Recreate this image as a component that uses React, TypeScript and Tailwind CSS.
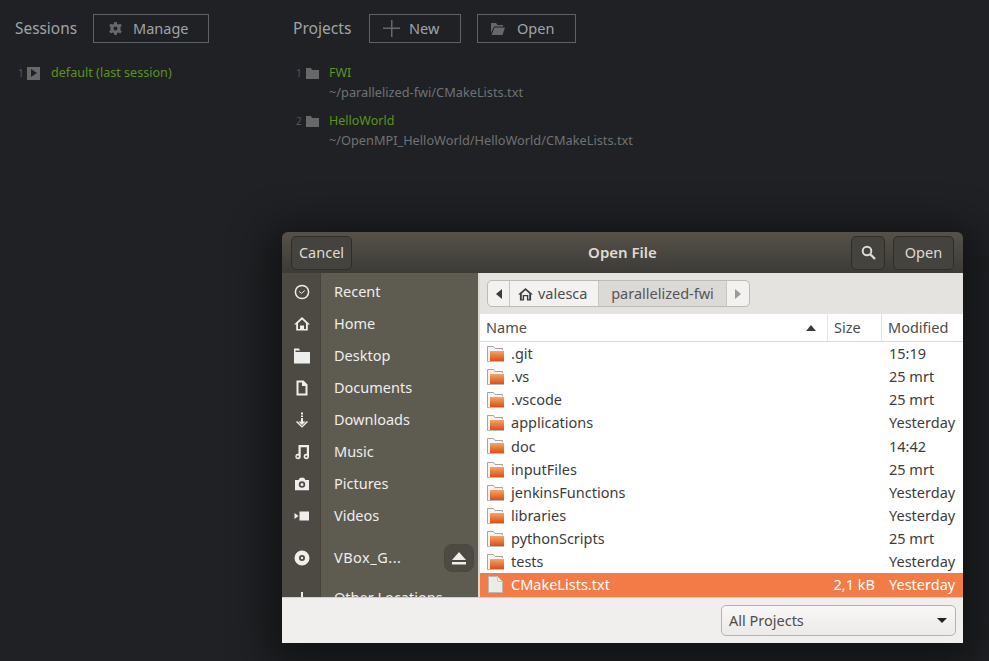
import React from "react";

const font = { fontFamily: '"Noto Sans", "DejaVu Sans", sans-serif' };

function Folder() {
  return (
    <svg width="17" height="16" viewBox="0 0 17 16" className="shrink-0">
      <defs>
        <linearGradient id="fg" x1="0" y1="0" x2="0" y2="1">
          <stop offset="0" stopColor="#f4a56e" />
          <stop offset="0.5" stopColor="#ea7a38" />
          <stop offset="1" stopColor="#d94f1a" />
        </linearGradient>
      </defs>
      <path d="M0.500 15.500V0.500H6.500L8 2.500H15.500V15.500z" fill="#f6f5f3" stroke="#a6a4a0" />
      <rect x="3" y="4" width="14" height="11" fill="#f7f3ee" />
      <rect x="3" y="5" width="14" height="10" fill="url(#fg)" />
      <rect x="1" y="15" width="16" height="1" fill="#bdb9b4" />
    </svg>
  );
}

function FileIcon() {
  return (
    <svg width="15" height="17" viewBox="0 0 15 17" className="shrink-0">
      <path d="M0.500 0.500H9.500L14.500 5.500V16.500H0.500z" fill="#ebebe9" stroke="#b9b8b5" />
      <path d="M9.500 0.500V5.500H14.500z" fill="#fbfbfa" stroke="#c9c8c5" />
    </svg>
  );
}

const side: [string, React.ReactNode][] = [
  ["Recent", <g key="r"><circle cx="8" cy="8" r="6.600" fill="none" stroke="#eeeeec" strokeWidth="1.500" /><path d="M5.200 7.600 7.600 9.400 10.800 6.400" fill="none" stroke="#eeeeec" strokeWidth="1" /></g>],
  ["Home", <path key="h" fillRule="evenodd" d="M8 1 16 8.500H13.800V14.500H2.200V8.500H0z M8 3.400 4 7.200V13H6V9.500H10V13H12V7.200z" fill="#eeeeec" />],
  ["Desktop", <path key="d" fillRule="evenodd" d="M0 0.500H5L6 2.500H1.500V4H16V15.500H0z" fill="#eeeeec" />],
  ["Documents", <path key="do" fillRule="evenodd" d="M2.500 0.500H9.500L13.500 4.500V15.500H2.500z M4.500 2.500V13.500H11.500V6H8V2.500z" fill="#eeeeec" />],
  ["Downloads", <path key="dl" d="M7 0.500H9V2.500H7z M7 3.500H9V5H7z M7 6H9V9.500H11.500L8 13 4.500 9.500H7z M2 10 3.200 9 8 14 12.800 9 14 10 8 15.800z" fill="#eeeeec" />],
  ["Music", <path key="m" fillRule="evenodd" d="M4.500 1H15V12.500A2.700 2.700 0 1 1 12.800 9.800V3.200H6.700V12.500A2.700 2.700 0 1 1 4.500 9.800z M3.800 11.400A1.100 1.100 0 1 0 3.800 13.600 1.100 1.100 0 0 0 3.800 11.400z M12.300 11.400A1.100 1.100 0 1 0 12.300 13.600 1.100 1.100 0 0 0 12.300 11.400z" fill="#eeeeec" />],
  ["Pictures", <path key="p" fillRule="evenodd" d="M1 4H4.500L6 1.800H10L11.500 4H15V14.200H1z M8 5.300A3.200 3.200 0 1 0 8 11.700 3.200 3.200 0 0 0 8 5.300z M8 7A1.500 1.500 0 1 1 8 10 1.500 1.500 0 0 1 8 7z" fill="#eeeeec" />],
  ["Videos", <path key="v" d="M5.500 3.500H15V12.500H5.500z M0.500 5 4.500 8 0.500 11z" fill="#eeeeec" />],
];

const rows = [
  [".git", "15:19"], [".vs", "25 mrt"], [".vscode", "25 mrt"], ["applications", "Yesterday"],
  ["doc", "14:42"], ["inputFiles", "25 mrt"], ["jenkinsFunctions", "Yesterday"], ["libraries", "Yesterday"],
  ["pythonScripts", "25 mrt"], ["tests", "Yesterday"],
];

function TopBtn({ w, pad, icon, label, gap }: { w: string; pad: string; icon: React.ReactNode; label: string; gap: string }) {
  return (
    <div className={`${w} ${gap} ${pad} h-[29px] border border-[#5f6265] flex items-center text-[14.5px] text-[#a0a4a8]`}>
      {icon}
      <span>{label}</span>
    </div>
  );
}

function Proj({ n, name, path }: { n: string; name: string; path: string }) {
  return (
    <div className="h-[48px]">
      <div className="flex items-center h-[18px]">
        <span className="w-[9px] text-[10px] text-[#55585b]">{n}</span>
        <svg width="13" height="11" viewBox="0 0 13 11" className="ml-[1px]"><path d="M0 0H5L6 2H13V11H0z" fill="#66686a" /></svg>
        <span className="ml-[10px] text-[12.5px] text-[#5a9420]">{name}</span>
      </div>
      <div className="ml-[33px] mt-[1px] h-[18px] text-[12.75px] text-[#6f7275] leading-[18px]">{path}</div>
    </div>
  );
}

export default function App() {
  return (
    <div className="relative w-[989px] h-[661px] overflow-hidden bg-[#1f2124]" style={font}>
      <div className="flex pt-[14px]">
        <div className="w-[293px] pl-[15px]">
          <div className="flex items-center">
            <span className="w-[78px] text-[15.4px] text-[#a0a4a8]">Sessions</span>
            <TopBtn w="w-[116px]" pad="pl-[15px]" gap="gap-[11px]" label="Manage" icon={
              <svg width="13" height="13" viewBox="0 0 16 16"><path fillRule="evenodd" d="M6.500 0H9.500L10 2.400 11.800 3.200 14 2 15.800 4.500 14 6 14.300 8 14 10 15.800 11.500 14 14 11.800 12.800 10 13.600 9.500 16H6.500L6 13.600 4.200 12.800 2 14 0.200 11.500 2 10 1.700 8 2 6 0.200 4.500 2 2 4.200 3.200 6 2.400z M8 5.500A2.500 2.500 0 1 0 8 10.500 2.500 2.500 0 0 0 8 5.500z" fill="#66686a" /></svg>
            } />
          </div>
          <div className="flex items-center h-[18px] mt-[21px] pl-[3px]">
            <span className="w-[9px] text-[10px] text-[#55585b]">1</span>
            <span className="w-[13px] h-[13px] bg-[#66686a] flex items-center justify-center">
              <svg width="6" height="8" viewBox="0 0 6 8"><path d="M0 0 6 4 0 8z" fill="#1f2124" /></svg>
            </span>
            <span className="ml-[11px] text-[12.6px] text-[#5a9420]">default (last session)</span>
          </div>
        </div>
        <div>
          <div className="flex items-center">
            <span className="w-[76px] text-[15.6px] text-[#a0a4a8]">Projects</span>
            <TopBtn w="w-[92px]" pad="pl-[13px]" gap="gap-[9px]" label="New" icon={
              <svg width="17" height="17" viewBox="0 0 17 17"><path d="M8 0H9.500V7.500H17V9H9.500V17H8V9H0V7.500H8z" fill="#66686a" /></svg>
            } />
            <div className="w-[16px]" />
            <TopBtn w="w-[99px]" pad="pl-[13px]" gap="gap-[12px]" label="Open" icon={
              <svg width="14" height="12" viewBox="0 0 14 12"><path d="M0 0H5L6.500 2H12V3.500H3L0 10z M3.500 4.500H14L11.500 12H0.500z" fill="#66686a" /></svg>
            } />
          </div>
          <div className="mt-[21px] pl-[3px]">
            <Proj n="1" name="FWI" path="~/parallelized-fwi/CMakeLists.txt" />
            <Proj n="2" name="HelloWorld" path="~/OpenMPI_HelloWorld/HelloWorld/CMakeLists.txt" />
          </div>
        </div>
      </div>

      {/* Open File dialog window */}
      <div className="absolute left-[282px] top-[232px] w-[681px] h-[411px] rounded-t-[6px] overflow-hidden flex flex-col shadow-[0_8px_40px_14px_rgba(0,0,0,0.45)]">
        <div className="h-[41px] shrink-0 bg-gradient-to-b from-[#56524a] to-[#3d3b36] flex items-center px-[9px] text-[14.5px] text-[#dfdbd2]">
          <div className="flex-1 flex">
            <div className="w-[61px] h-[34px] rounded-[5px] border border-[#2e2d29] bg-[#45433d] flex items-center justify-center">Cancel</div>
          </div>
          <div className="font-semibold text-[15px]">Open File</div>
          <div className="flex-1 flex justify-end">
            <div className="w-[34px] h-[34px] rounded-[5px] border border-[#2e2d29] bg-[#45433d] flex items-center justify-center">
              <svg width="15" height="15" viewBox="0 0 15 15"><circle cx="6" cy="6" r="4.300" fill="none" stroke="#dfdbd2" strokeWidth="2" /><path d="M9.500 9.500 14 14" stroke="#dfdbd2" strokeWidth="2.400" /></svg>
            </div>
            <div className="w-[61px] h-[34px] ml-[8px] rounded-[5px] border border-[#2e2d29] bg-[#45433d] flex items-center justify-center">Open</div>
          </div>
        </div>
        <div className="flex h-[324px] shrink-0">
          <div className="w-[198px] shrink-0 flex bg-[#5e5b50] border-r-[2px] border-[#dcdad5] overflow-hidden">
            <div className="w-[39px] bg-[#4c4a42] border-r border-[#46443d] shrink-0 h-full" />
            <div className="w-[156px] -ml-[39px] shrink-0 relative z-10">
              <div className="h-[3px]" />
              {side.map(([label, icon]) => (
                <div key={label} className="h-[32px] flex items-center text-[14.5px] text-[#eeeeec] w-[195px]">
                  <svg width="16" height="16" viewBox="0 0 16 16" className="ml-[12px]">{icon}</svg>
                  <span className="ml-[24px]">{label}</span>
                </div>
              ))}
              <div className="h-[52px] flex items-center text-[14.5px] text-[#eeeeec] w-[195px]">
                <svg width="16" height="16" viewBox="0 0 16 16" className="ml-[12px]">
                  <path fillRule="evenodd" d="M8 0.500A7.500 7.500 0 1 0 8 15.500 7.500 7.500 0 0 0 8 0.500z M8 5A3 3 0 1 1 8 11 3 3 0 0 1 8 5z M8 6.800A1.200 1.200 0 1 0 8 9.200 1.200 1.200 0 0 0 8 6.800z" fill="#eeeeec" />
                </svg>
                <span className="ml-[24px] w-[110px] tracking-[0.5px]">VBox_G...</span>
                <div className="w-[30px] h-[28px] rounded-[8px] bg-[#4c4a42] border border-[#4a4840] flex items-center justify-center">
                  <svg width="14" height="13" viewBox="0 0 14 13"><path d="M7 0 14 8H0z M0 10H14V12.500H0z" fill="#eeeeec" /></svg>
                </div>
              </div>
              <div className="h-[32px] -mt-[2px] flex items-center text-[14.5px] text-[#eeeeec] w-[195px]">
                <svg width="16" height="16" viewBox="0 0 16 16" className="ml-[12px]"><path d="M7 2H9V7H14V9H9V14H7V9H2V7H7z" fill="#eeeeec" /></svg>
                <span className="ml-[24px]">Other Locations</span>
              </div>
            </div>
          </div>
          <div className="flex-1 flex flex-col bg-white overflow-hidden">
            <div className="h-[41px] shrink-0 bg-[#e4e3e0] flex items-center pl-[7px]">
              <div className="h-[27px] flex items-center rounded-[5px] border border-[#bdbbb6] bg-[#f3f2f0] text-[14.5px] text-[#4c4c4c]">
                <div className="w-[22px] h-full flex items-center justify-center border-r border-[#c9c7c2]">
                  <svg width="6" height="10" viewBox="0 0 6 10"><path d="M6 0V10L0 5z" fill="#3c3c3c" /></svg>
                </div>
                <div className="w-[88px] h-full flex items-center gap-[5px] pl-[8px]">
                  <svg width="15" height="14" viewBox="0 0 16 15"><path d="M8 1 16 8H14V14.500H9.500V10H6.500V14.500H2V8H0zM4 7V13H5V8.500H11V13H12V7L8 3.400z" fill="#3c3c3c" fillRule="evenodd" /></svg>
                  <span>valesca</span>
                </div>
                <div className="w-[129px] h-full flex items-center justify-center bg-[#dcdad7] border-x border-[#c9c7c2] text-[#555]">parallelized-fwi</div>
                <div className="w-[22px] h-full flex items-center justify-center">
                  <svg width="6" height="10" viewBox="0 0 6 10"><path d="M0 0V10L6 5z" fill="#9a9a98" /></svg>
                </div>
              </div>
            </div>
            <div className="h-[28px] shrink-0 flex items-center border-b border-[#dcdad5] text-[14.5px] text-[#4c4c4c]">
              <div className="w-[348px] h-full flex items-center justify-between pl-[6px] pr-[11px] border-r border-[#e4e3e0]">
                <span>Name</span>
                <svg width="10" height="6" viewBox="0 0 10 6"><path d="M5 0 10 6H0z" fill="#3c3c3c" /></svg>
              </div>
              <div className="w-[54px] h-full flex items-center pl-[6px] border-r border-[#e4e3e0]">Size</div>
              <div className="pl-[6px]">Modified</div>
            </div>
            <div className="flex-1 text-[14.5px] text-[#3c3c3c] pt-[0.5px]">
              {rows.map(([n, d]) => (
                <div key={n} className="h-[23.100px] flex items-center">
                  <div className="w-[351px] flex items-center pl-[7px] gap-[7px]"><Folder /><span>{n}</span></div>
                  <div className="w-[58px]" />
                  <div>{d}</div>
                </div>
              ))}
              <div className="h-[23.100px] flex items-center bg-[#f37b48] text-white">
                <div className="w-[351px] flex items-center pl-[8px] gap-[8px]"><FileIcon /><span>CMakeLists.txt</span></div>
                <div className="w-[44px] text-right">2,1 kB</div>
                <div className="ml-[14px]">Yesterday</div>
              </div>
            </div>
          </div>
        </div>
        <div className="flex-1 bg-[#f0efed] border-t border-[#d3d1cc] flex items-center justify-end pr-[7px]">
          <div className="w-[235px] h-[31px] rounded-[5px] border border-[#b5b3ae] bg-gradient-to-b from-[#f8f7f6] to-[#eceae8] flex items-center justify-between px-[7px] text-[14.5px] text-[#4c4c4c]">
            <span>All Projects</span>
            <svg width="10" height="5" viewBox="0 0 10 5" className="mr-[1px]"><path d="M0 0H10L5 5z" fill="#222" /></svg>
          </div>
        </div>
      </div>
    </div>
  );
}
